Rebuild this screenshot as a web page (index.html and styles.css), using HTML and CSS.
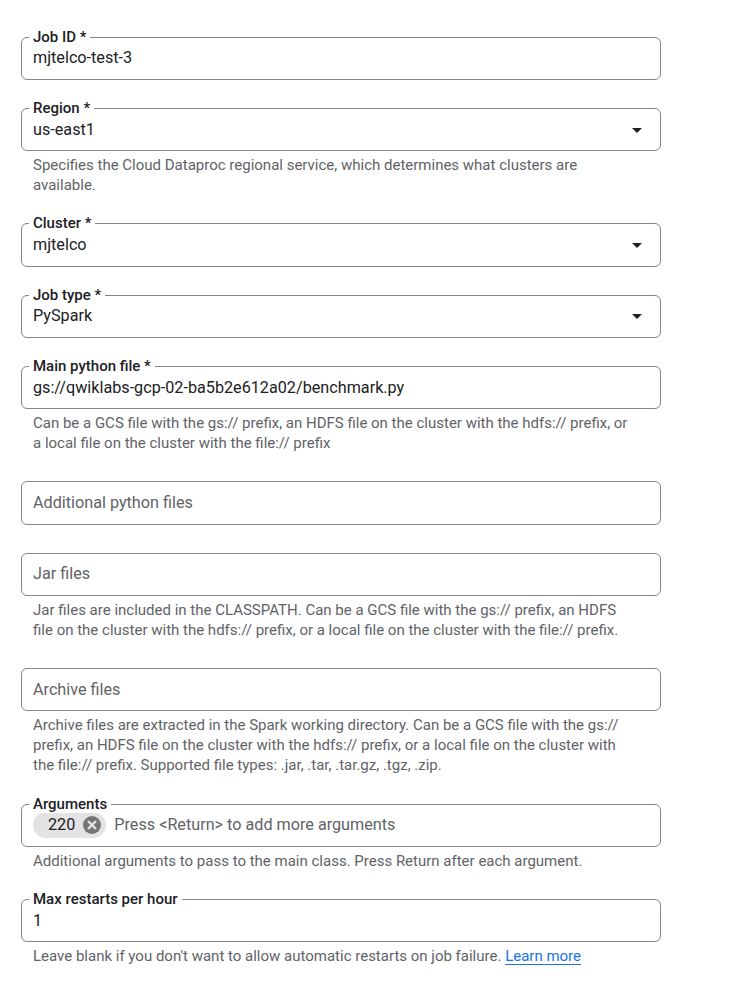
FILE: index.html
```html
<!DOCTYPE html>
<html lang="en">
<head>
<meta charset="utf-8">
<title>Submit a job</title>
<link rel="stylesheet" href="styles.css">
</head>
<body>
<form class="form">
  <div class="field">
    <div class="box"><span class="label">Job ID *</span><span class="value">mjtelco-test-3</span></div>
  </div>

  <div class="field">
    <div class="box select"><span class="label">Region *</span><span class="value">us-east1</span>
      <svg class="arrow" width="24" height="24" viewBox="0 0 24 24"><path d="M7 10l5 5 5-5z" fill="#202124"/></svg>
    </div>
    <p class="hint">Specifies the Cloud Dataproc regional service, which determines what clusters are available.</p>
  </div>

  <div class="field">
    <div class="box select"><span class="label">Cluster *</span><span class="value">mjtelco</span>
      <svg class="arrow" width="24" height="24" viewBox="0 0 24 24"><path d="M7 10l5 5 5-5z" fill="#202124"/></svg>
    </div>
  </div>

  <div class="field">
    <div class="box select"><span class="label">Job type *</span><span class="value">PySpark</span>
      <svg class="arrow" width="24" height="24" viewBox="0 0 24 24"><path d="M7 10l5 5 5-5z" fill="#202124"/></svg>
    </div>
  </div>

  <div class="field">
    <div class="box"><span class="label">Main python file *</span><span class="value">gs://qwiklabs-gcp-02-ba5b2e612a02/benchmark.py</span></div>
    <p class="hint">Can be a GCS file with the gs:// prefix, an HDFS file on the cluster with the hdfs:// prefix, or a local file on the cluster with the file:// prefix</p>
  </div>

  <div class="field">
    <div class="box"><span class="placeholder">Additional python files</span></div>
  </div>

  <div class="field">
    <div class="box"><span class="placeholder">Jar files</span></div>
    <p class="hint">Jar files are included in the CLASSPATH. Can be a GCS file with the gs:// prefix, an HDFS file on the cluster with the hdfs:// prefix, or a local file on the cluster with the file:// prefix.</p>
  </div>

  <div class="field">
    <div class="box"><span class="placeholder">Archive files</span></div>
    <p class="hint">Archive files are extracted in the Spark working directory. Can be a GCS file with the gs:// prefix, an HDFS file on the cluster with the hdfs:// prefix, or a local file on the cluster with the file:// prefix. Supported file types: .jar, .tar, .tar.gz, .tgz, .zip.</p>
  </div>

  <div class="field">
    <div class="box chips"><span class="label">Arguments</span>
      <span class="chip"><span class="chip-text">220</span>
        <svg class="chip-x" width="20" height="20" viewBox="0 0 20 20"><circle cx="10" cy="10" r="9" fill="#757575"/><path d="M6.6 6.6l6.8 6.8M13.4 6.6l-6.8 6.8" stroke="#e0e0e0" stroke-width="2.2" stroke-linecap="round"/></svg>
      </span>
      <span class="placeholder">Press &lt;Return&gt; to add more arguments</span>
    </div>
    <p class="hint">Additional arguments to pass to the main class. Press Return after each argument.</p>
  </div>

  <div class="field">
    <div class="box"><span class="label">Max restarts per hour</span><span class="value">1</span></div>
    <p class="hint">Leave blank if you don't want to allow automatic restarts on job failure. <a class="link" href="#">Learn more</a></p>
  </div>
</form>
</body>
</html>
```

FILE: styles.css
```css
html, body {
  margin: 0;
  padding: 0;
  background: #ffffff;
}

body {
  font-family: Roboto, "Noto Sans", "Liberation Sans", sans-serif;
  color: #202124;
}

.form {
  width: 640px;
  padding: 36.6px 0 0 21px;
  display: flex;
  flex-direction: column;
  gap: 28.2px;
}

.field {
  display: flex;
  flex-direction: column;
}

.box {
  position: relative;
  box-sizing: border-box;
  height: 43.2px;
  border: 1px solid #80868b;
  border-radius: 6px;
  display: flex;
  align-items: center;
  padding: 0 11px;
  font-size: 16.2px;
  line-height: 24px;
}

.select {
  justify-content: space-between;
}

.arrow {
  display: block;
  flex: none;
}

.label {
  position: absolute;
  top: -10px;
  left: 7px;
  padding: 0 4px;
  background: #ffffff;
  font-size: 15px;
  line-height: 18px;
  font-weight: 500;
  color: #202124;
}

.value {
  color: #202124;
}

.placeholder {
  color: #5f6368;
}

.chips {
  gap: 8px;
}

.chip {
  display: inline-flex;
  align-items: center;
  gap: 7px;
  height: 26px;
  padding: 0 4px 0 15px;
  border-radius: 13px;
  background: #e3e3e3;
  color: #202124;
}

.chip-x {
  display: block;
}

.hint {
  margin: 0;
  padding: 4px 28px 0 12px;
  font-size: 15px;
  line-height: 20px;
  color: #5f6368;
}

.link {
  color: #1a73e8;
  text-decoration: underline;
  text-underline-offset: 3px;
}
```
